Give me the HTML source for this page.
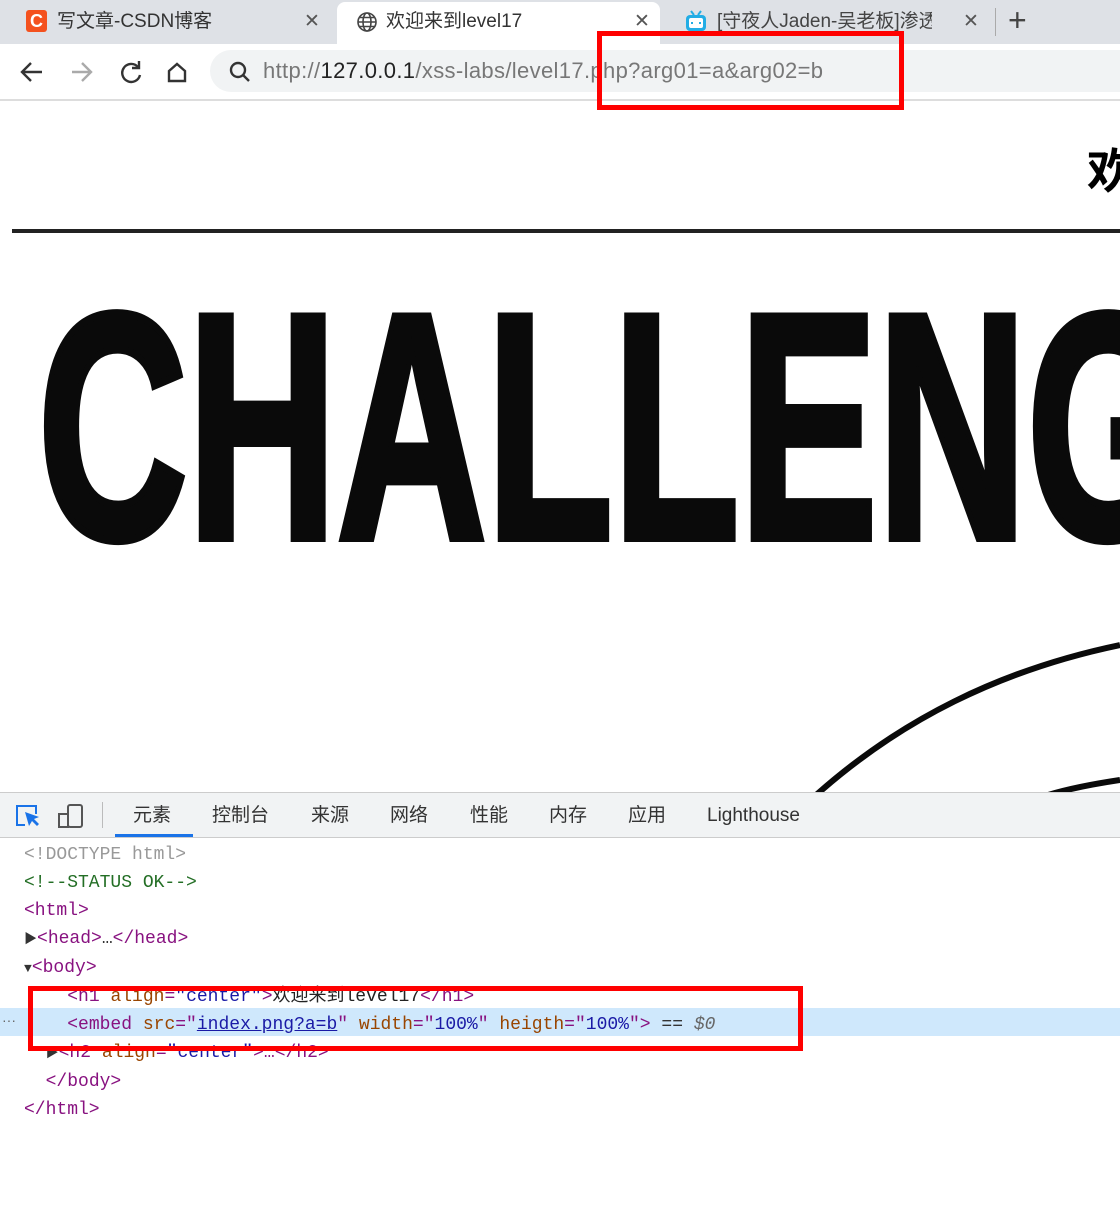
<!DOCTYPE html>
<html><head><meta charset="utf-8"><style>
*{margin:0;padding:0;box-sizing:border-box}
html,body{width:1120px;height:1215px;overflow:hidden}
body{background:#fff;font-family:"Liberation Sans","Noto Sans CJK SC",sans-serif;position:relative}
.abs{position:absolute}
.tabs{left:0;top:0;width:1120px;height:44px;background:#dee1e6}
.tab{top:4px;height:40px;font-size:19px;color:#333;line-height:36px}
.addr{left:210px;top:50px;width:910px;height:42px;background:#f1f3f4;border-radius:21px 0 0 21px}
.dt{left:0;top:792px;width:1120px;height:46px;background:#f1f3f4;border-top:1px solid #ccc;border-bottom:1px solid #ccc}
.dtab{top:803px;font-size:19px;color:#333;line-height:26px}
.code{left:0;font-family:"Liberation Mono","Noto Sans CJK SC",monospace;font-size:18px;line-height:28px;white-space:pre;color:#881280}
.t{color:#881280}.a{color:#994500}.v{color:#1a1aa6}.g{color:#999}
</style></head><body>
<div class="abs tabs"></div>
<div class="abs" style="left:337px;top:2px;width:323px;height:42px;background:#fff;border-radius:8px 8px 0 0"></div>
<div class="abs" style="left:26px;top:10px;width:21px;height:22px;background:#f4511e;border-radius:3px;color:#fff;font-weight:bold;font-size:18px;text-align:center;line-height:22px">C</div>
<div class="abs tab" style="left:57px">写文章-CSDN博客</div>
<div class="abs tab" style="left:304px;color:#555">✕</div>
<svg class="abs" style="left:356px;top:11px" width="22" height="22" viewBox="0 0 22 22" fill="none" stroke="#444" stroke-width="1.6"><circle cx="11" cy="11" r="9"/><ellipse cx="11" cy="11" rx="4" ry="9"/><path d="M2 11h18M3.5 6.5h15M3.5 15.5h15"/></svg>
<div class="abs tab" style="left:386px">欢迎来到level17</div>
<div class="abs tab" style="left:634px;color:#555">✕</div>
<svg class="abs" style="left:684px;top:9px" width="24" height="24" viewBox="0 0 24 24"><rect x="2" y="6" width="20" height="16" rx="4" fill="#23ade5"/><path d="M7 2l3 4M17 2l-3 4" stroke="#23ade5" stroke-width="2"/><rect x="5" y="9" width="14" height="10" rx="2" fill="#fff"/><path d="M8 13v2M16 13v2" stroke="#23ade5" stroke-width="2"/></svg>
<div class="abs tab" style="left:717px;width:215px;overflow:hidden;white-space:nowrap;color:#444">[守夜人Jaden-吴老板]渗透</div>
<div class="abs tab" style="left:963px;color:#555">✕</div>
<div class="abs" style="left:995px;top:8px;width:1px;height:28px;background:#aaa"></div>
<div class="abs" style="left:1008px;top:2px;font-size:32px;line-height:36px;color:#444">+</div>
<svg class="abs" style="left:18px;top:58px" width="180" height="28" viewBox="0 0 180 28" fill="none" stroke-width="2.4"><path d="M24 14H5M13 5l-9 9 9 9" stroke="#333"/><path d="M54 14h19M64 5l9 9-9 9" stroke="#aaa"/><path d="M120 9a9 9 0 1 0 2 8" stroke="#333"/><path d="M121 3v7h-7" stroke="#333"/><path d="M151 13l8-7 8 7v10h-16z" stroke="#333"/></svg>
<div class="abs addr"></div>
<svg class="abs" style="left:228px;top:60px" width="24" height="24" viewBox="0 0 24 24" fill="none" stroke="#333" stroke-width="2.4"><circle cx="10" cy="10" r="7"/><path d="M15 15l6 6"/></svg>
<div class="abs" style="left:263px;top:58px;font-size:22px;letter-spacing:0.35px;color:#777;white-space:nowrap">http://<span style="color:#222">127.0.0.1</span>/xss-labs/level17.php?arg01=a&amp;arg02=b</div>
<div class="abs" style="left:0;top:99px;width:1120px;height:2px;background:#ddd"></div>
<div class="abs" style="left:1087px;top:132px;font-size:48px;font-weight:bold;color:#000;white-space:nowrap;width:33px;overflow:hidden">欢</div>
<div class="abs" style="left:12px;top:229px;width:1108px;height:4px;background:#222"></div>
<svg class="abs" style="left:0;top:240px" width="1120" height="552">
<text x="38" y="298" font-family="Liberation Sans" font-weight="bold" font-size="322" textLength="1150" lengthAdjust="spacingAndGlyphs" fill="#0a0a0a" stroke="#0a0a0a" stroke-width="8" stroke-linejoin="miter">CHALLENG</text>
<path d="M815 556C900 480 1000 430 1120 405" stroke="#0a0a0a" stroke-width="6" fill="none"/>
<path d="M1045 556C1070 548 1100 543 1120 540" stroke="#0a0a0a" stroke-width="6" fill="none"/>
</svg>
<div class="abs dt"></div>
<svg class="abs" style="left:14px;top:803px" width="72" height="26" viewBox="0 0 72 26" fill="none"><path d="M11 22H3V3h19v8" stroke="#1a73e8" stroke-width="2"/><path d="M11 9l4 14 3-5 5 5 2-2-5-5 5-2z" fill="#1a73e8"/><rect x="54" y="2" width="14" height="22" rx="2" stroke="#555" stroke-width="2"/><rect x="45" y="11" width="9" height="13" stroke="#555" stroke-width="2"/></svg>
<div class="abs" style="left:102px;top:802px;width:1px;height:26px;background:#bbb"></div>
<div class="abs dtab" style="left:133px">元素</div>
<div class="abs" style="left:115px;top:834px;width:78px;height:3px;background:#1a73e8"></div>
<div class="abs dtab" style="left:212px">控制台</div>
<div class="abs dtab" style="left:311px">来源</div>
<div class="abs dtab" style="left:390px">网络</div>
<div class="abs dtab" style="left:470px">性能</div>
<div class="abs dtab" style="left:549px">内存</div>
<div class="abs dtab" style="left:628px">应用</div>
<div class="abs dtab" style="left:707px">Lighthouse</div>
<div class="abs" style="left:0;top:1008px;width:1120px;height:28px;background:#cfe8fc"></div>
<div class="abs code" style="top:841px;left:24px"><span class="g">&lt;!DOCTYPE html&gt;</span>
<span style="color:#236e25">&lt;!--STATUS OK--&gt;</span>
<span class="t">&lt;html&gt;</span>
<span style="color:#333;font-size:13px">▶</span><span class="t">&lt;head&gt;</span><span style="color:#333">…</span><span class="t">&lt;/head&gt;</span>
<span style="color:#333;font-size:13px">▼</span><span class="t">&lt;body&gt;</span>
    <span class="t">&lt;h1 </span><span class="a">align</span>=<span class="v">"center"</span><span class="t">&gt;</span><span style="color:#222">欢迎来到level17</span><span class="t">&lt;/h1&gt;</span>
    <span class="t">&lt;embed </span><span class="a">src</span><span class="t">="</span><span style="color:#1a1aa6;text-decoration:underline">index.png?a=b</span><span class="t">" </span><span class="a">width</span><span class="t">="</span><span class="v">100%</span><span class="t">" </span><span class="a">heigth</span><span class="t">="</span><span class="v">100%</span><span class="t">"&gt;</span> <span style="color:#333">==</span> <i style="color:#666">$0</i>
  <span style="color:#333;font-size:13px">▶</span><span class="t">&lt;h2 </span><span class="a">align</span>=<span class="v">"center"</span><span class="t">&gt;</span>…<span class="t">&lt;/h2&gt;</span>
  <span class="t">&lt;/body&gt;</span>
<span class="t">&lt;/html&gt;</span></div>
<div class="abs" style="left:2px;top:1012px;color:#666;font-size:14px">···</div>
<div class="abs" style="left:597px;top:31px;width:307px;height:79px;border:5px solid #f00"></div>
<div class="abs" style="left:28px;top:986px;width:775px;height:65px;border:5px solid #f00"></div>
</body></html>
